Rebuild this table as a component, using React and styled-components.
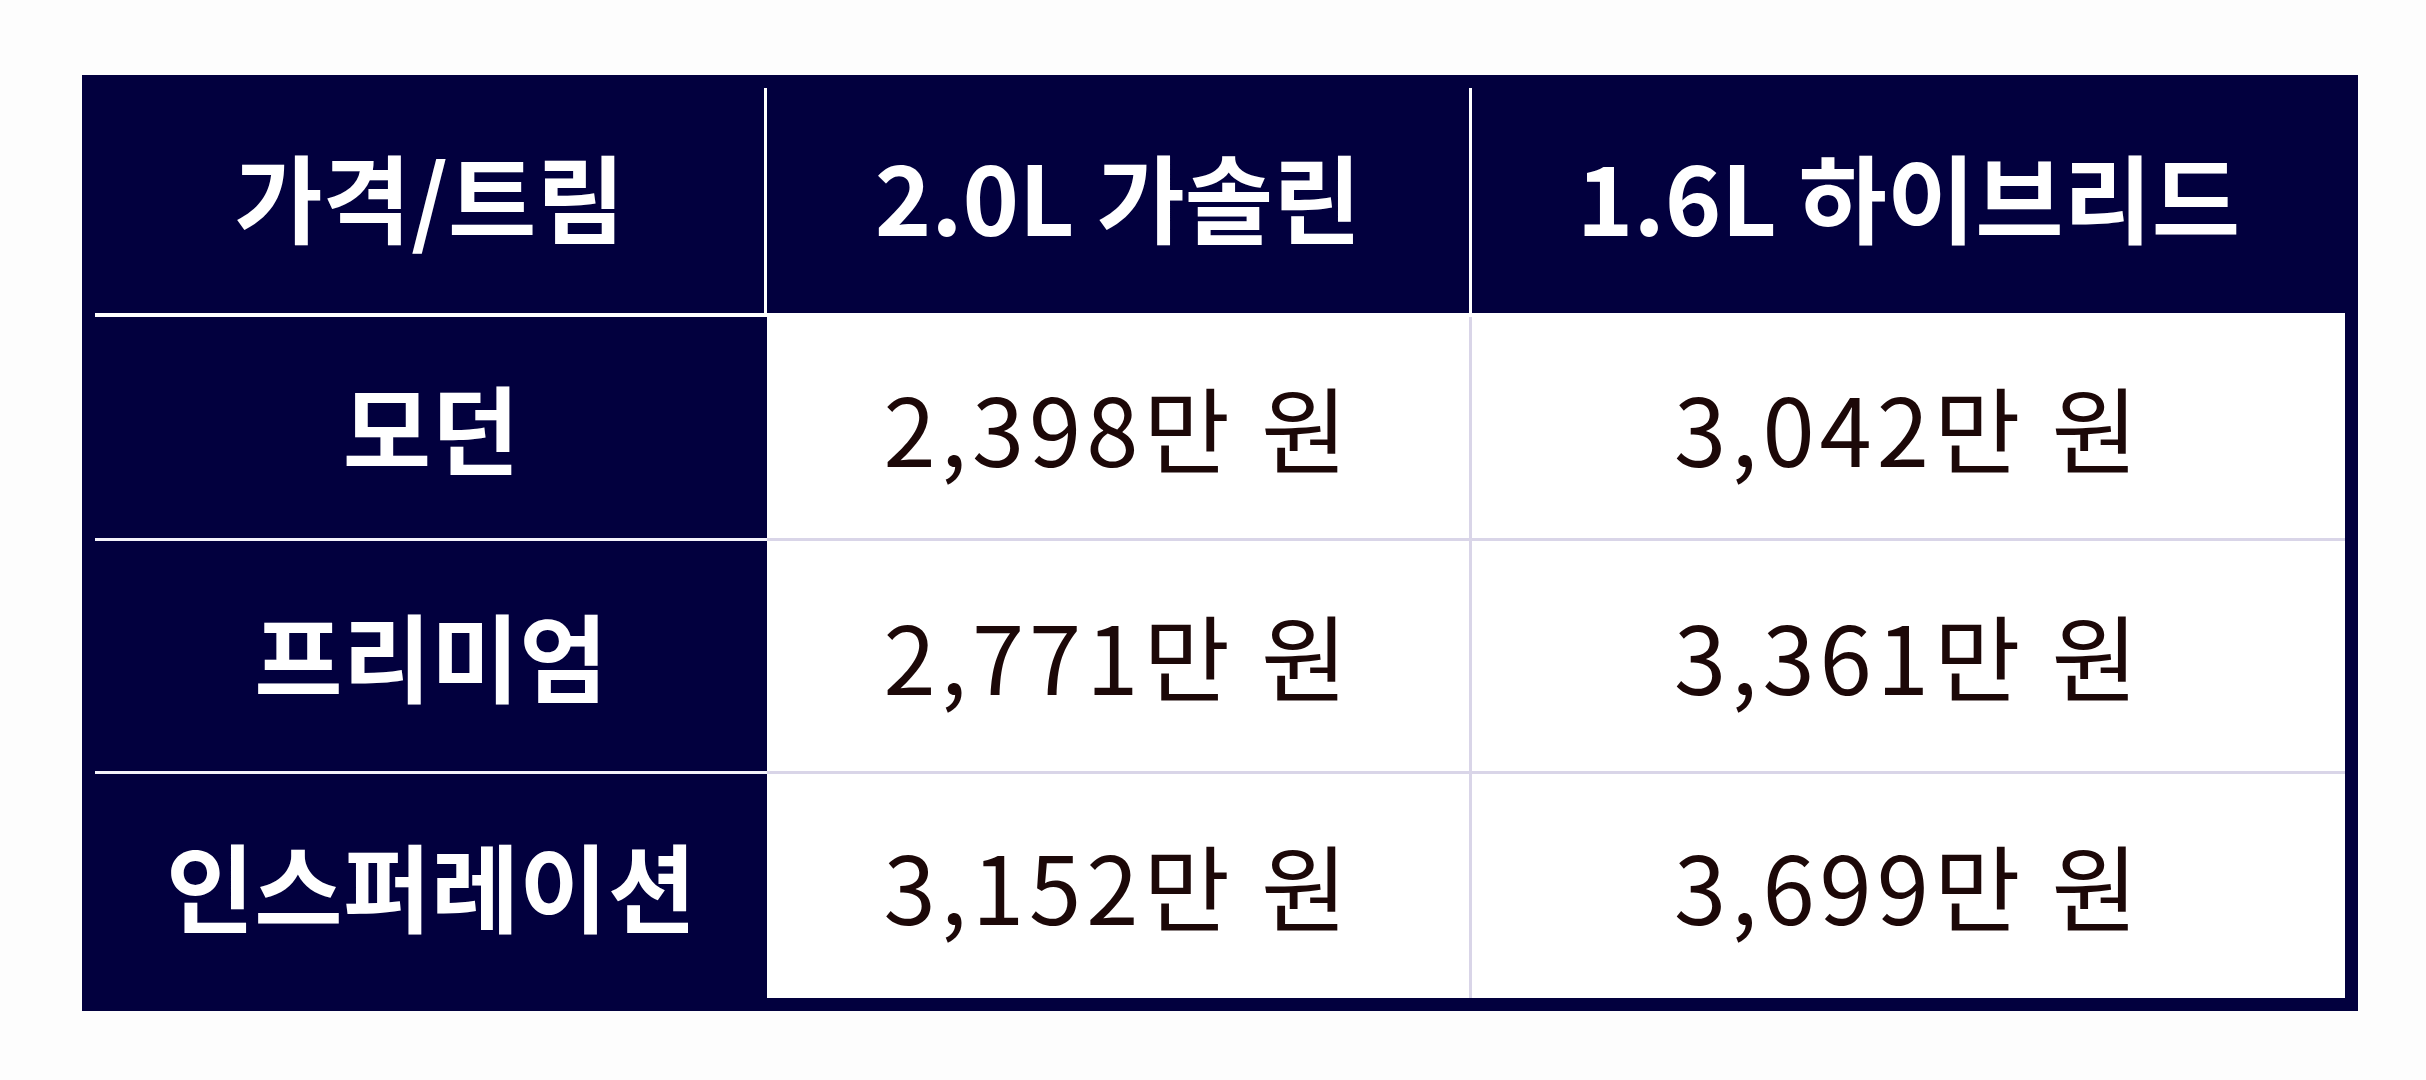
import React from "react";
import styled, { createGlobalStyle } from "styled-components";

const NAVY = "#02003e";

const GlobalStyle = createGlobalStyle`
  html, body {
    margin: 0;
    padding: 0;
    background: #fdfdfd;
  }
  body {
    font-family: "Noto Sans CJK KR", "Noto Sans", sans-serif;
  }
`;

// price table data
const columns = ["가격/트림", "2.0L 가솔린", "1.6L 하이브리드"];
const rows = [
  { trim: "모던", prices: ["2,398만 원", "3,042만 원"] },
  { trim: "프리미엄", prices: ["2,771만 원", "3,361만 원"] },
  { trim: "인스퍼레이션", prices: ["3,152만 원", "3,699만 원"] },
];
const rowHeights = [224, 233, 224];

const Frame = styled.div`
  margin: 75px 0 0 82px;
  width: 2250px;
  padding: 13px;
  background: ${NAVY};
`;

const Grid = styled.div`
  display: grid;
  grid-template-columns: 672px 705px 873px;
  grid-template-rows: 229px ${rowHeights.map((h) => `${h}px`).join(" ")};
`;

const Cell = styled.div`
  display: flex;
  align-items: center;
  justify-content: center;
  box-sizing: border-box;
  line-height: 1;
  white-space: nowrap;
  background: ${(p) => (p.$dark ? NAVY : "#ffffff")};
  color: ${(p) => (p.$dark ? "#ffffff" : "#1c0808")};
  font-size: ${(p) => (p.$dark ? "96px" : "94px")};
  font-weight: ${(p) => (p.$dark ? 700 : 400)};
  letter-spacing: ${(p) => (p.$dark ? "0px" : "5px")};
  border-right: ${(p) => (p.$right ? `3px solid ${p.$line}` : "none")};
  border-bottom: ${(p) => (p.$bottom ? `${p.$bottom}px solid ${p.$line}` : "none")};
  padding-bottom: ${(p) => (p.$head ? "12px" : "4px")};
`;

export default function App() {
  return (
    <>
      <GlobalStyle />
      <Frame>
        <Grid>
          {columns.map((c, i) => (
            <Cell
              key={c}
              $dark
              $head
              $line="#ffffff"
              $right={i < columns.length - 1}
              $bottom={4}
            >
              {c}
            </Cell>
          ))}
          {rows.map((r, ri) => {
            const last = ri === rows.length - 1;
            return (
              <React.Fragment key={r.trim}>
                <Cell $dark $line="#f4f2fa" $bottom={last ? 0 : 3}>
                  {r.trim}
                </Cell>
                {r.prices.map((p, pi) => (
                  <Cell
                    key={p}
                    $line="#d9d5e8"
                    $right={pi === 0}
                    $bottom={last ? 0 : 3}
                  >
                    {p}
                  </Cell>
                ))}
              </React.Fragment>
            );
          })}
        </Grid>
      </Frame>
    </>
  );
}
